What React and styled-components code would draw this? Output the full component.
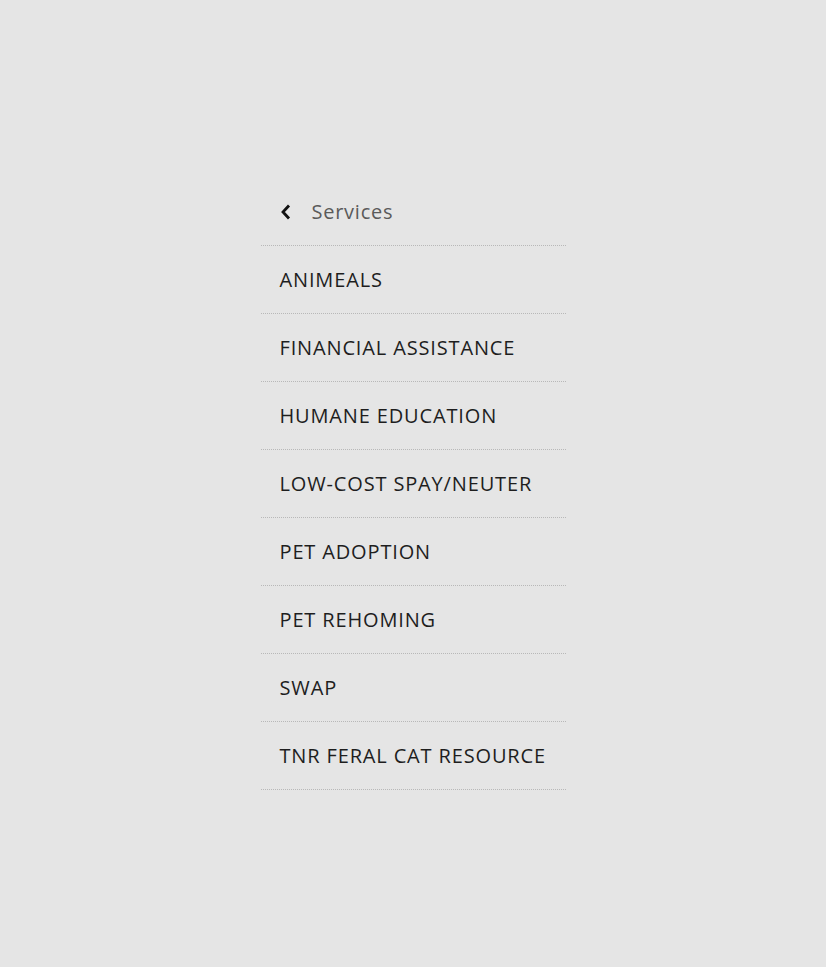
import React from "react";
import styled, {createGlobalStyle} from "styled-components";

const GlobalStyle = createGlobalStyle`
  html, body {
    margin: 0;
    padding: 0;
    background: #e5e5e5;
  }
  body {
    font-family: "Open Sans", "Noto Sans", sans-serif;
  }
`;

const Page = styled.div`
  min-height: 967px;
  display: flex;
  justify-content: center;
  padding-top: 178px;
  box-sizing: border-box;
`;

const Menu = styled.nav`
  width: 305px;
  display: flex;
  flex-direction: column;
`;

const Row = styled.div`
  height: 68px;
  display: flex;
  align-items: center;
  gap: 21px;
  padding: 0 19px;
  box-sizing: border-box;
  border-bottom: 1px dotted #b8b8b8;
  font-size: 20px;
  white-space: nowrap;
  letter-spacing: ${props => props.$spacing || "0.85px"};
  color: ${props => props.$muted ? "#5a5a5a" : "#1e1e1e"};
  cursor: pointer;
`;

const Chevron = styled.svg`
  width: 11px;
  height: 16px;
`;

const items = [
    "ANIMEALS",
    "FINANCIAL ASSISTANCE",
    "HUMANE EDUCATION",
    "LOW-COST SPAY/NEUTER",
    "PET ADOPTION",
    "PET REHOMING",
    "SWAP",
    "TNR FERAL CAT RESOURCE",
];

export default function App() {
    return (
        <>
            <GlobalStyle/>
            <Page>
                <Menu>
                    <Row $muted $spacing="0.75px">
                        <Chevron viewBox="0 0 11 16">
                            <path d="M9 1.5 L3 8 L9 14.5" fill="none" stroke="#111" strokeWidth="2.8"/>
                        </Chevron>
                        <span>Services</span>
                    </Row>
                    {items.map((item, i) => (
                        <Row key={i}>{item}</Row>
                    ))}
                </Menu>
            </Page>
        </>
    );
}
